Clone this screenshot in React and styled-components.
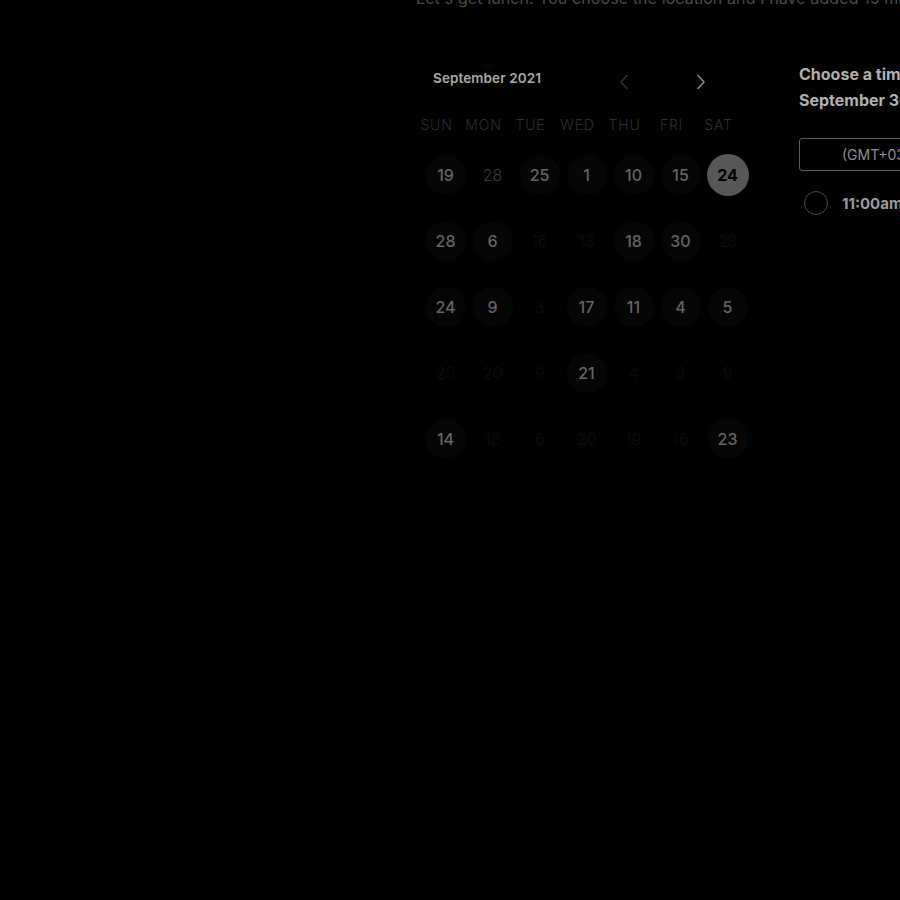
import React from "react";
import styled, { createGlobalStyle } from "styled-components";

const Global = createGlobalStyle`
  html, body { margin: 0; padding: 0; background: #000; overflow: hidden; }
  body { font-family: Inter, "Noto Sans", sans-serif; }
`;

const Page = styled.div`
  width: 900px;
  height: 900px;
  overflow: hidden;
  padding-left: 416px;
  box-sizing: border-box;
  background: #000;
`;

const Intro = styled.p`
  margin: -14px 0 0;
  font-size: 16px;
  line-height: 24px;
  color: #4a4a4a;
  white-space: nowrap;
  letter-spacing: 0.1px;
`;

const Layout = styled.div`
  display: flex;
  align-items: flex-start;
  margin-top: 34px;
`;

const Calendar = styled.div`
  width: 369px;
  flex: none;
  padding-top: 24px;
`;

const CalHeader = styled.div`
  display: flex;
  align-items: center;
  height: 28px;
  padding-left: 17px;
`;

const Month = styled.div`
  font-size: 13.5px;
  font-weight: 600;
  color: #a8a8a8;
  width: 183px;
  letter-spacing: 0.1px;
  margin-top: -8px;
`;

const Arrow = styled.button`
  all: unset;
  display: flex;
  width: 16px;
  height: 16px;
  align-items: center;
  justify-content: center;
  color: ${(p) => p.$color};
  margin-right: ${(p) => p.$gap}px;
`;

const Weekdays = styled.div`
  display: grid;
  grid-template-columns: repeat(7, 47px);
  margin-top: 19px;
  margin-left: -3px;
`;

const Weekday = styled.div`
  text-align: center;
  font-size: 14px;
  font-weight: 300;
  letter-spacing: 0.8px;
  color: #2f2f2f;
  line-height: 20px;
`;

const Days = styled.div`
  display: grid;
  grid-template-columns: repeat(7, 47px);
  grid-auto-rows: 66px;
  margin-left: 6px;
  margin-top: 7px;
`;

const Cell = styled.div`
  display: flex;
  align-items: center;
  justify-content: center;
`;

const Day = styled.div`
  width: ${(p) => (p.$state === "sel" ? 42 : 40)}px;
  height: ${(p) => (p.$state === "sel" ? 42 : 40)}px;
  border-radius: 50%;
  display: flex;
  align-items: center;
  justify-content: center;
  font-size: 16px;
  background: ${(p) =>
    p.$state === "sel" ? "#575757" : p.$state === "on" ? "#050505" : "transparent"};
  color: ${(p) =>
    p.$state === "sel"
      ? "#000"
      : p.$state === "on"
      ? "#646464"
      : p.$state === "dim"
      ? "#3a3a3a"
      : "#0c0c0c"};
  font-weight: ${(p) => (p.$state === "sel" ? 700 : p.$state === "on" ? 500 : 300)};
`;

const Panel = styled.div`
  flex: none;
  width: 400px;
  padding: 17px 14px 0;
  background: #010101;
  min-height: 300px;
`;

const PanelTitle = styled.h2`
  margin: 0;
  font-size: 16px;
  font-weight: 700;
  line-height: 26px;
  color: #b0b0b0;
  white-space: nowrap;
`;

const Zone = styled.div`
  margin-top: 25px;
  height: 31px;
  border: 1px solid #5e5e5e;
  border-radius: 3px;
  display: flex;
  align-items: center;
  padding-left: 42px;
  font-size: 14px;
  color: #8e8e8e;
  white-space: nowrap;
`;

const Slot = styled.label`
  display: flex;
  align-items: center;
  gap: 14px;
  margin-top: 20px;
  padding-left: 5px;
`;

const Radio = styled.span`
  width: 22px;
  height: 22px;
  border-radius: 50%;
  border: 1.5px solid #484848;
  flex: none;
`;

const SlotText = styled.span`
  font-size: 15px;
  font-weight: 700;
  color: #9a9a9a;
`;

const weekdays = ["SUN", "MON", "TUE", "WED", "THU", "FRI", "SAT"];

const days = [
  ["19", "on"], ["28", "dim"], ["25", "on"], ["1", "on"], ["10", "on"], ["15", "on"], ["24", "sel"],
  ["28", "on"], ["6", "on"], ["16", "off"], ["13", "off"], ["18", "on"], ["30", "on"], ["28", "off"],
  ["24", "on"], ["9", "on"], ["3", "off"], ["17", "on"], ["11", "on"], ["4", "on"], ["5", "on"],
  ["23", "off"], ["20", "off"], ["9", "off"], ["21", "on"], ["4", "off"], ["9", "off"], ["9", "off"],
  ["14", "on"], ["18", "off"], ["6", "off"], ["20", "off"], ["19", "off"], ["16", "off"], ["23", "on"],
];

const Chevron = ({ dir }) => (
  <svg width="10" height="16" viewBox="0 0 10 16" fill="none">
    <path
      d={dir === "left" ? "M8 1.5 L2 8 L8 14.5" : "M2 1.5 L8 8 L2 14.5"}
      stroke="currentColor"
      strokeWidth="1.6"
      strokeLinecap="round"
      strokeLinejoin="round"
    />
  </svg>
);

export default function App() {
  return (
    <Page>
      <Global />
      <Intro>
        Let's get lunch. You choose the location and I have added 15 minutes to the time for travel.
      </Intro>
      <Layout>
        <Calendar>
          <CalHeader>
            <Month>September 2021</Month>
            <Arrow $color="#303030" $gap={61}>
              <Chevron dir="left" />
            </Arrow>
            <Arrow $color="#8a8a8a" $gap={0}>
              <Chevron dir="right" />
            </Arrow>
          </CalHeader>
          <Weekdays>
            {weekdays.map((w) => (
              <Weekday key={w}>{w}</Weekday>
            ))}
          </Weekdays>
          <Days>
            {days.map(([n, s], i) => (
              <Cell key={i}>
                <Day $state={s}>{n}</Day>
              </Cell>
            ))}
          </Days>
        </Calendar>
        <Panel>
          <PanelTitle>Choose a time on</PanelTitle>
          <PanelTitle>September 30, Thursday</PanelTitle>
          <Zone>(GMT+03:00) Moscow, St. Petersburg</Zone>
          <Slot>
            <Radio />
            <SlotText>11:00am</SlotText>
          </Slot>
        </Panel>
      </Layout>
    </Page>
  );
}
